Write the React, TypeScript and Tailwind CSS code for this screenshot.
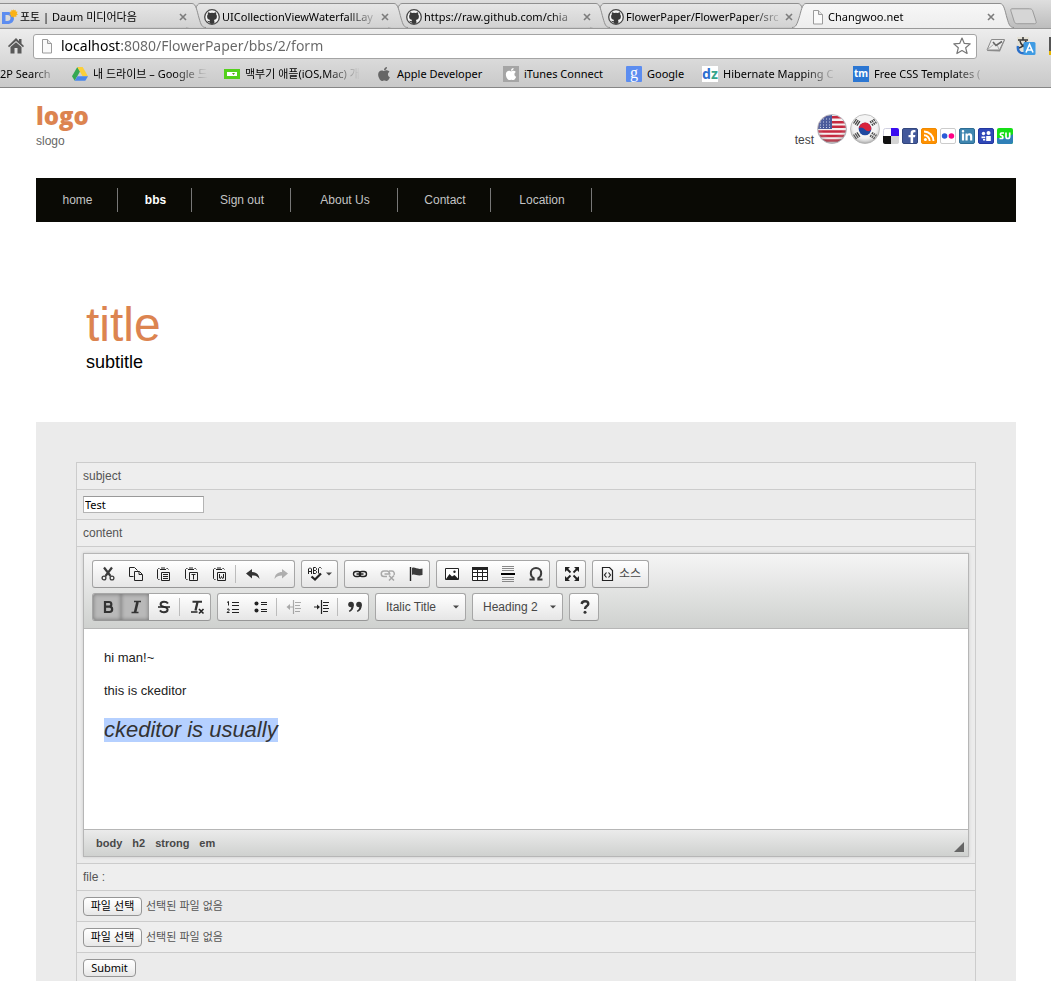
import React from "react";
import { FaApple, FaFacebookF, FaLinkedinIn } from "react-icons/fa";

const UI = "font-['Noto_Sans','Noto_Sans_CJK_KR',sans-serif]";
const ARIAL = "font-['Liberation_Sans','Noto_Sans_CJK_KR',sans-serif]";

/* ---------- browser window ---------- */

function PageIcon() {
  return (
    <svg width="16" height="16" viewBox="0 0 16 16" className="shrink-0" aria-hidden="true">
      <path d="M3.500 1.500h5l4 4v9.500h-9z" fill="#fafafa" stroke="#9a9a9a" />
      <path d="M8.500 1.500v4h4" fill="#e4e4e4" stroke="#9a9a9a" />
    </svg>
  );
}

function GithubIcon() {
  return (
    <svg width="16" height="16" viewBox="0 0 16 16" className="shrink-0" aria-hidden="true">
      <circle cx="8" cy="8" r="7.300" fill="#f4f4f4" stroke="#484848" strokeWidth="1.300" />
      <path
        fill="#3a3a3a"
        d="M4 3.200c.8 0 1.500.3 2.100.8a8 8 0 0 1 3.800 0c.6-.5 1.300-.8 2.100-.8.3.8.3 1.500.1 2.100.6.700.8 1.400.8 2.300 0 2.100-1.200 3.100-3 3.400.4.500.5.900.5 1.500v2c-1.500.500-3.300.500-4.800 0v-1.300c-1.500.3-1.900-.5-2.400-1.400.9-.1 1.400.6 2.400.4 0-.5.2-.9.500-1.200-1.800-.3-3-1.300-3-3.400 0-.9.200-1.600.8-2.300-.2-.6-.2-1.300.1-2.100z"
      />
    </svg>
  );
}

function DaumIcon() {
  return (
    <svg width="16" height="16" viewBox="0 0 16 16" className="shrink-0" aria-hidden="true">
      <path fillRule="evenodd" fill="#5d8df0" d="M0 3h5.500c4 0 6.500 2.200 6.500 6s-2.500 6-6.500 6H0zM3.500 6v6h2c2 0 3-1 3-3s-1-3-3-3z" />
      <path fill="#fbb216" d="m11 0 .9 1.500L13.600.8l.1 1.800 1.900.2-.9 1.600 1.300 1.300-1.800.5.200 1.800-1.700-.5L11.500 9l-.9-1.600-1.800.5.200-1.800-1.800-.4 1.300-1.300-.9-1.600 1.800-.2V.8l1.600.7z" />
    </svg>
  );
}

function TabShape({ active }: { active?: boolean }) {
  const edge = "M0 24.500C4 24.500 5 21 7 15S10 .5 14 .5H208C212 .5 213 8 215 15S218 24.500 222 24.500";
  return (
    <svg width="223" height="26" viewBox="0 0 223 26" className="pointer-events-none absolute top-0 -left-4" aria-hidden="true">
      <defs>
        <linearGradient id={active ? "tabOn" : "tabOff"} x1="0" x2="0" y1="0" y2="1">
          <stop offset="0" stopColor={active ? "#f7f7f7" : "#e6e6e6"} />
          <stop offset="1" stopColor={active ? "#ededed" : "#d2d2d2"} />
        </linearGradient>
      </defs>
      <path d={edge + (active ? "V26H0z" : "z")} fill={active ? "url(#tabOn)" : "url(#tabOff)"} />
      <path d={edge} fill="none" stroke="#8f8f8f" />
    </svg>
  );
}

function Close() {
  return (
    <svg width="8" height="8" viewBox="0 0 8 8" aria-hidden="true">
      <path d="m1 1 6 6M7 1 1 7" stroke="#7c7c7c" strokeWidth="1.600" />
    </svg>
  );
}

const tabs = [
  { icon: <DaumIcon />, title: "포토 | Daum 미디어다음", z: "z-[4]" },
  { icon: <GithubIcon />, title: "UICollectionViewWaterfallLay", z: "z-[3]" },
  { icon: <GithubIcon />, title: "https://raw.github.com/chia", z: "z-[2]" },
  { icon: <GithubIcon />, title: "FlowerPaper/FlowerPaper/src", z: "z-[1]" },
  { icon: <PageIcon />, title: "Changwoo.net", z: "z-[5]", active: true },
];

function TabStrip() {
  return (
    <div className="flex h-[29px] items-end overflow-hidden border-b border-[#999] bg-linear-to-b from-[#dedede] to-[#bdbdbd]">
      {tabs.map((t) => (
        <div key={t.title} className={`relative flex h-[25px] w-[202px] shrink-0 ${t.z}`}>
          <TabShape active={t.active} />
          <div className="relative flex w-full items-center gap-[2px] pt-[2px] pr-[15px] pl-[2px]">
            <button className="flex min-w-0 flex-1 items-center gap-[2px] text-left">
              {t.icon}
              <span className="flex-1 text-[11px] leading-4 whitespace-nowrap text-black [mask-image:linear-gradient(to_right,black_80%,transparent)]">
                {t.title}
              </span>
            </button>
            <button aria-label="Close tab">
              <Close />
            </button>
          </div>
        </div>
      ))}
      <button aria-label="New tab" className="mb-[3px]">
        <svg width="27" height="17" viewBox="0 0 28 17" aria-hidden="true">
          <path d="M2 .5h18c2 0 3 .7 3.500 2l3.500 11c.5 1.500 0 2.500-1.500 2.500H8c-2 0-3-.7-3.500-2L1 3C.6 1.500.7.5 2 .5z" fill="#d6d6d6" stroke="#989898" />
        </svg>
      </button>
    </div>
  );
}

function AddressBar() {
  return (
    <div className="flex h-[33px] items-center pt-px pl-2">
      <button aria-label="Home">
        <svg width="16" height="16" viewBox="0 0 16 16" aria-hidden="true">
          <path fill="#595959" d="M8 0 0 8l1 1.200L8 3l7 6.200L16 8l-2.500-2.500V1H11v2z" />
          <path fill="#595959" d="M8 4.200 2.500 9v6.500h4V10h3v5.500h4V9z" />
        </svg>
      </button>
      <label className="ml-[9px] flex h-[25px] flex-1 items-center gap-[6px] rounded-[3px] border border-[#a4a4a4] bg-white px-[5px]">
        <PageIcon />
        <input
          aria-label="Address"
          defaultValue="localhost:8080/FlowerPaper/bbs/2/form"
          className="min-w-0 flex-1 bg-[linear-gradient(to_right,#000_60px,#666_60px)] bg-clip-text text-[14px] leading-5 text-transparent outline-none"
        />
        <svg width="18" height="18" viewBox="0 0 18 18" aria-hidden="true">
          <path d="m9 1 2.300 5.400 5.900.5-4.500 3.900 1.400 5.700L9 13.500l-5.100 3 1.400-5.700L.8 6.900l5.900-.5z" fill="#fff" stroke="#777" strokeWidth="1.200" strokeLinejoin="round" />
        </svg>
      </label>
      <button aria-label="Mail" className="ml-[9px]">
        <svg width="20" height="16" viewBox="0 0 20 16" aria-hidden="true">
          <path d="M6 2h13l-5 11.500L1 13z" fill="#8a8a8a" />
          <path d="M5.500 1.500h13l-5 10.500H1z" fill="#ececec" stroke="#8b8b8b" />
          <path d="M1.500 11.500l6-5M13 11.500l-2-5" fill="none" stroke="#aaa" />
          <path d="m7 4 3 3.500L16 3.500" fill="none" stroke="#666" strokeWidth="1.600" />
        </svg>
      </button>
      <button aria-label="Translate" className="ml-[10px]">
        <svg width="20" height="20" viewBox="0 0 20 20" aria-hidden="true">
          <rect width="12" height="14" x="1" y="1" fill="#e4e1d6" />
          <path d="M2 4h10M7 1v3M4 5c1 4 4 6 7 6M10 5c-1 4-4 6-7 7" fill="none" stroke="#333" strokeWidth="1.500" />
          <path d="M2 10c-1 6 3 8 7 7" fill="none" stroke="#2a6fc9" strokeWidth="2.500" />
          <rect width="12" height="13" x="7.500" y="6" rx="1.500" fill="#3f9be3" />
          <path d="m10 16.500 3.500-8 3.500 8M11.300 14h4.400" fill="none" stroke="#fff" strokeWidth="1.600" />
        </svg>
      </button>
      <svg width="2" height="18" viewBox="0 0 2 18" className="ml-[13px]" aria-hidden="true">
        <path d="M0 0h2v14H0z" fill="#555" />
        <path d="M0 14h2v4H0z" fill="#e5b400" />
      </svg>
    </div>
  );
}

const DriveIcon = () => (
  <svg width="16" height="16" viewBox="0 0 16 16" className="shrink-0" aria-hidden="true">
    <path d="M5.300 1 0 10.200l2.700 4.600L8 5.600z" fill="#35a853" />
    <path d="M5.300 1h5.400L16 10.200h-5.400z" fill="#fbcf3b" />
    <path d="M2.700 14.800 5.400 10.200H16l-2.700 4.600z" fill="#4a86ea" />
  </svg>
);
const GreenIcon = () => (
  <svg width="16" height="16" viewBox="0 0 16 16" className="shrink-0" aria-hidden="true">
    <path d="M0 3h16v10H0z" fill="#53d01c" />
    <path d="M3 6h10v4H3z" fill="#fff" />
    <path d="M8 7h3L9.500 9z" fill="#53a01c" />
  </svg>
);
const FADE = "[mask-image:linear-gradient(to_right,black_70%,transparent)]";
const bookmarks = [
  { icon: <DriveIcon />, label: "내 드라이브 – Google 드", w: "w-[136px]", fade: true },
  { icon: <GreenIcon />, label: "맥부기 애플(iOS,Mac) 개", w: "w-[136px]", fade: true },
  { icon: <FaApple size={16} className="shrink-0 text-[#666]" />, label: "Apple Developer", w: "w-[111px]" },
  {
    icon: (
      <span className="flex size-4 shrink-0 items-center justify-center bg-[#a5a5a5] text-white">
        <FaApple size={14} />
      </span>
    ),
    label: "iTunes Connect",
    w: "w-[107px]",
  },
  {
    icon: (
      <span className="flex size-4 shrink-0 items-center justify-center rounded-[1px] bg-[#5c8df0] pb-[3px] font-['Liberation_Serif',serif] text-[16px] leading-4 text-white">
        g
      </span>
    ),
    label: "Google",
    w: "w-[60px]",
  },
  {
    icon: (
      <span className="flex size-4 shrink-0 items-center justify-center bg-white text-[14px] leading-4 font-bold text-[#2f6fd0]">
        d<span className="text-[#35a58a]">z</span>
      </span>
    ),
    label: "Hibernate Mapping C",
    w: "w-[135px]",
    fade: true,
  },
  {
    icon: (
      <span className="flex size-4 shrink-0 items-center justify-center bg-[#2b76d2] pb-[2px] text-[10px] leading-4 font-bold text-white">tm</span>
    ),
    label: "Free CSS Templates (",
    w: "w-[135px]",
    fade: true,
  },
];

function Bookmarks() {
  return (
    <nav aria-label="Bookmarks" className="flex h-[25px] items-center gap-4 overflow-hidden pb-px text-[11px] leading-4 text-black">
      <a href="#search" className="w-14 shrink-0 whitespace-nowrap [mask-image:linear-gradient(to_right,black_60%,transparent)]">
        2P Search
      </a>
      {bookmarks.map((b) => (
        <a key={b.label} href="#bookmark" className={`flex shrink-0 items-center gap-[5px] ${b.w}`}>
          {b.icon}
          <span className={`flex-1 whitespace-nowrap ${b.fade ? FADE : ""}`}>{b.label}</span>
        </a>
      ))}
    </nav>
  );
}

/* ---------- site header ---------- */

function UsFlag() {
  return (
    <svg width="30" height="30" viewBox="0 0 30 30" aria-hidden="true">
      <defs>
        <clipPath id="usClip"><circle cx="15" cy="15" r="14" /></clipPath>
        <radialGradient id="shade" cx=".5" cy=".4" r=".6">
          <stop offset=".6" stopColor="#fff" stopOpacity="0" />
          <stop offset="1" stopColor="#444" stopOpacity=".45" />
        </radialGradient>
      </defs>
      <g clipPath="url(#usClip)">
        <path d="M0 0h30v30H0z" fill="#f5f0f0" />
        <path d="M0 3.200h30M0 8.200h30M0 12.800h30M0 17.400h30M0 22h30M0 26.600h30" stroke="#c5283f" strokeWidth="2.500" />
        <path d="M0 0h15v15H0z" fill="#4a5a9b" />
        <path d="M3 5h12M3 8h12M3 11h12M3 13.500h12" stroke="#c9d0e8" strokeDasharray="1 2" />
      </g>
      <circle cx="15" cy="15" r="14.500" fill="url(#shade)" stroke="#a9a9b4" strokeWidth=".8" />
    </svg>
  );
}

function KrFlag() {
  return (
    <svg width="30" height="30" viewBox="0 0 30 30" aria-hidden="true">
      <circle cx="15" cy="15" r="14" fill="#f4f4f4" />
      <circle cx="15" cy="15" r="6.300" fill="#1f48a0" />
      <path d="M8.700 14.500a6.300 6.300 0 0 1 12.600.8c-1.500 2.700-4.500 2.200-6.300.2s-4.800-2.700-6.300-1z" fill="#d8233b" />
      <g stroke="#444" strokeWidth="1.300">
        <path d="m3.500 9.500 3-4.500M5.200 10.600l3-4.500M6.900 11.700l3-4.500" />
        <path d="m26.500 9.500-3-4.500M24.800 10.600l-3-4.500M23.100 11.700l-3-4.500" strokeDasharray="2.300 .8" />
        <path d="m3.500 20.500 3 4.500M5.200 19.400l3 4.500M6.900 18.300l3 4.500" />
        <path d="m26.500 20.500-3 4.500M24.800 19.400l-3 4.500M23.100 18.300l-3 4.500" strokeDasharray="2.300 .8" />
      </g>
      <circle cx="15" cy="15" r="14.500" fill="url(#shade)" stroke="#b0b0b0" strokeWidth=".8" />
    </svg>
  );
}

const BADGE = "flex size-4 items-center justify-center overflow-hidden rounded-[2px] border text-white";

function HeaderLinks() {
  return (
    <div className="flex items-end gap-[3px] pr-[3px]">
      <span className="-mb-1 text-xs leading-4 text-[#444]">test</span>
      <a href="#en" aria-label="English"><UsFlag /></a>
      <a href="#ko" aria-label="Korean"><KrFlag /></a>
      <a href="#delicious" aria-label="Delicious">
        <svg width="16" height="16" viewBox="0 0 16 16" aria-hidden="true">
          <rect x=".5" y=".5" width="15" height="15" rx="2" fill="#fff" stroke="#d0d0e0" />
          <path d="M8 0h6a2 2 0 0 1 2 2v6H8z" fill="#3a0df0" />
          <path d="M0 8h8v8H2a2 2 0 0 1-2-2z" fill="#111" />
          <path d="M8 8h8v6a2 2 0 0 1-2 2H8z" fill="#d4d4d4" />
        </svg>
      </a>
      <a href="#facebook" aria-label="Facebook" className={`${BADGE} items-end border-[#33477e] bg-[#43599b] pl-1`}>
        <FaFacebookF size={13} />
      </a>
      <a href="#rss" aria-label="RSS" className={`${BADGE} border-[#f08a00] bg-[#ff9100]`}>
        <svg width="12" height="12" viewBox="0 0 12 12" aria-hidden="true">
          <path d="M1 1.500A9.500 9.500 0 0 1 10.500 11M1 5.300A5.700 5.700 0 0 1 6.700 11" fill="none" stroke="#fff" strokeWidth="1.900" />
          <circle cx="2.400" cy="9.600" r="1.500" fill="#fff" />
        </svg>
      </a>
      <a href="#flickr" aria-label="Flickr" className={`${BADGE} border-[#ccc] bg-white`}>
        <svg width="14" height="8" viewBox="0 0 14 8" aria-hidden="true">
          <circle cx="3.600" cy="4" r="2.800" fill="#2a5bd7" />
          <circle cx="10.400" cy="4" r="2.800" fill="#ff0084" />
        </svg>
      </a>
      <a href="#linkedin" aria-label="LinkedIn" className={`${BADGE} border-[#2d6d94] bg-[#3f86b0]`}>
        <FaLinkedinIn size={12} />
      </a>
      <a href="#myspace" aria-label="Myspace" className={`${BADGE} border-[#2237a0] bg-[#3048b8]`}>
        <svg width="14" height="14" viewBox="0 0 14 14" fill="#fff" aria-hidden="true">
          <circle cx="4.500" cy="4.500" r="1.700" /><circle cx="9.500" cy="4" r="2" />
          <path d="M2.500 7.500h3.700v1.700H2.500zM7.200 7h4.600v5H7.200zM4 10h2.200v1.500H4z" />
        </svg>
      </a>
      <a href="#stumbleupon" aria-label="StumbleUpon">
        <svg width="16" height="16" viewBox="0 0 16 16" aria-hidden="true">
          <rect width="16" height="16" rx="2" fill="#16df16" />
          <path d="M0 10c5 0 11 0 16-4v8a2 2 0 0 1-2 2H2a2 2 0 0 1-2-2z" fill="#2f80b8" />
          <path d="M7 5H4.500C3 5 3 7.500 4.500 7.500S6.500 10.500 5 10.500H2.500M9 4.500v4.300c0 1.200.5 1.700 1.700 1.700s2-.5 2-1.700V4.500" fill="none" stroke="#fff" strokeWidth="1.700" />
        </svg>
      </a>
    </div>
  );
}

const navItems = ["home", "bbs", "Sign out", "About Us", "Contact", "Location"];

/* ---------- editor ---------- */

function Icon({ children, dim }: { children: React.ReactNode; dim?: boolean }) {
  return (
    <svg width="16" height="16" viewBox="0 0 16 16" fill="none" stroke="#222" className={dim ? "opacity-35" : ""} aria-hidden="true">
      {children}
    </svg>
  );
}

function Tool({ label, children, dim, on }: { label: string; children: React.ReactNode; dim?: boolean; on?: boolean }) {
  return (
    <button
      aria-label={label}
      disabled={dim}
      aria-pressed={on}
      className={`flex h-[26px] w-7 items-center justify-center pl-px ${on ? "bg-[#b9b9b9] shadow-[inset_0_0_4px_rgba(0,0,0,0.4)]" : ""}`}
    >
      <Icon dim={dim}>{children}</Icon>
    </button>
  );
}

const BOX = "flex h-7 items-center overflow-hidden rounded-[3px] border border-[#a6a6a6] border-b-[#979797] bg-linear-to-b from-white to-[#e6e6e6]";
const Group = ({ children }: { children: React.ReactNode }) => <div className={BOX}>{children}</div>;
const Sep = () => <span className="mx-[2px] h-[18px] w-px bg-[#bcbcbc]" />;

const clipboard = <path d="M3.500 2.500H2.500L1.500 3.500v9l1 1h1M10.500 2.500h1l1 1M4 3.500h6M5 2h4" />;

function Combo({ label, value }: { label: string; value: string }) {
  return (
    <div className={`${BOX} relative w-[91px]`}>
      <select aria-label={label} className="w-full appearance-none bg-transparent pl-[10px] text-xs leading-4 text-[#474747] outline-none">
        <option>{value}</option>
      </select>
      <svg width="6" height="4" viewBox="0 0 6 4" className="pointer-events-none absolute right-[6px]" aria-hidden="true">
        <path d="M0 .5h6l-3 3z" fill="#474747" />
      </svg>
    </div>
  );
}

function Toolbar() {
  return (
    <div className="flex flex-col gap-[5px] border-b border-[#b6b6b6] bg-linear-to-b from-[#f5f5f5] to-[#cfd1cf] px-2 pt-[6px] pb-[7px]">
      <div className="flex flex-wrap gap-[6px]">
        <Group>
          <Tool label="Cut">
            <path d="M4 1.500 10.500 10M12 1.500 5.500 10" stroke="#3c3c3c" strokeWidth="2.200" />
            <circle cx="4" cy="12" r="1.900" stroke="#3c3c3c" strokeWidth="1.300" /><circle cx="12" cy="12" r="1.900" stroke="#3c3c3c" strokeWidth="1.300" />
          </Tool>
          <Tool label="Copy">
            <path d="M5.500 10.500h-4v-9h5l3 3M6.500 5.500h5l3 3v6h-8zM11 5.500v3h3" />
          </Tool>
          <Tool label="Paste">
            {clipboard}<path d="M5.500 6.500h8v8h-8zM7 8.500h5M7 10.500h5M7 12.500h5" />
          </Tool>
          <Tool label="Paste as plain text">
            {clipboard}<path d="M5.500 6.500h8v8h-8zM7.500 8.500h4M9.500 8.500v5" />
          </Tool>
          <Tool label="Paste from Word">
            {clipboard}<path d="M5.500 6.500h8v8h-8zM7.500 8v4l1 .5 1-2 1 2 1-.5V8" />
          </Tool>
          <Sep />
          <Tool label="Undo">
            <path d="M1 7.500 7 3v3c4 0 7 2 7.500 7C12.500 10 10 9.500 7 9.500v3z" fill="#333" stroke="none" />
          </Tool>
          <Tool label="Redo" dim>
            <path d="M15 7.500 9 3v3c-4 0-7 2-7.500 7C3.500 10 6 9.500 9 9.500v3z" fill="#333" stroke="none" />
          </Tool>
        </Group>
        <div className={BOX}>
          <button aria-label="Spell check" className="flex h-[26px] w-[35px] items-center justify-center gap-px">
            <svg width="18" height="16" viewBox="0 0 18 16" fill="none" stroke="#222" aria-hidden="true">
              <path d="M1.500 8V3l1-1h1l1 1v5M1.500 5.500h3M6.500 8V1.500h2l1 1v1l-1 1h-2M8.500 4.500l1 1v1l-1 1h-2M14.500 2.500l-1-1h-1l-1 1V7l1 1" />
              <path d="m4.500 10.500 3.500 3 6-6" strokeWidth="2.200" />
            </svg>
            <svg width="6" height="4" viewBox="0 0 6 4" aria-hidden="true"><path d="M0 .5h6l-3 3z" fill="#474747" /></svg>
          </button>
        </div>
        <Group>
          <Tool label="Link">
            <rect x="1.500" y="5.500" width="7" height="5" rx="2.500" strokeWidth="1.400" />
            <rect x="7.500" y="5.500" width="7" height="5" rx="2.500" strokeWidth="1.400" />
            <path d="M4.500 8h7" strokeWidth="1.400" />
          </Tool>
          <Tool label="Unlink" dim>
            <path d="M7 10.500H4a2.700 2.700 0 0 1 0-5.500h3a2.700 2.700 0 0 1 2.500 3M9 5h3a2.700 2.700 0 0 1 2 4M4.500 8h6" strokeWidth="1.500" />
            <path d="m9 9.500 5 5M14 9.500l-5 5" strokeWidth="1.500" />
          </Tool>
          <Tool label="Anchor">
            <path d="M2.500 1v14" strokeWidth="1.400" />
            <path d="M4 2c3-1.500 5 2 10.500.5V9C9 10.500 7 7.500 4 9z" fill="#3c3c3c" stroke="none" />
          </Tool>
        </Group>
        <Group>
          <Tool label="Image">
            <path d="M1.500 2.500h13v11h-13z" fill="#fff" />
            <path d="m2 13 3.500-5 2.500 2.500L10.500 9l4 4z" fill="#222" stroke="none" /><circle cx="10.500" cy="5.800" r="1.200" fill="#222" stroke="none" />
          </Tool>
          <Tool label="Table">
            <path d="M.500 1.500h15v13H.500z" fill="#fff" />
            <path d="M0 2.500h16" strokeWidth="3" /><path d="M5.500 3v11M10.500 3v11M1 6.500h14M1 10.500h14" />
          </Tool>
          <Tool label="Horizontal line">
            <path d="M2 .5h12M2 2.500h12M2 4.500h12M2 11.500h12M2 13.500h12M2 15.500h12" stroke="#888" />
            <path d="M1 8h14" strokeWidth="2" stroke="#000" />
          </Tool>
          <Tool label="Special character">
            <path d="M1.500 13.500h4.200v-1.300C3.800 11 2.800 9.300 2.800 7.300 2.800 4 5 2 8 2s5.200 2 5.200 5.300c0 2-1 3.700-2.900 4.900v1.300h4.200" stroke="#3c3c3c" strokeWidth="2" />
          </Tool>
        </Group>
        <Group>
          <Tool label="Maximize">
            <path d="m2 2 4.500 4.500M14 2 9.500 6.500M2 14l4.500-4.500M14 14 9.500 9.500" strokeWidth="1.800" />
            <path d="M1 1h5L1 6zM15 1h-5l5 5zM1 15h5l-5-5zM15 15h-5l5-5z" fill="#222" stroke="none" />
          </Tool>
        </Group>
        <div className={BOX}>
          <button className="flex h-[26px] w-[55px] items-center justify-center gap-[3px] text-xs leading-4 text-[#474747]">
            <Icon>
              <path d="M2.500 1.500h7l3 3v10h-10zM6.500 6.500l-2 2.500 2 2.500M8.500 6.500l2 2.500-2 2.500" strokeWidth="1.200" />
            </Icon>
            소스
          </button>
        </div>
      </div>
      <div className="flex flex-wrap gap-[6px]">
        <Group>
          <Tool label="Bold" on>
            <path d="M5 3h4a2.300 2.300 0 0 1 0 4.700H5zM5 7.700h4.500a2.500 2.500 0 0 1 0 5.300H5z" stroke="#333" strokeWidth="2.200" />
          </Tool>
          <Tool label="Italic" on>
            <path d="M6 2.500h7M3.500 13.500h7" stroke="#333" strokeWidth="1.600" /><path d="M9.500 3 7 13.500" stroke="#333" strokeWidth="2.600" />
          </Tool>
          <Tool label="Strike through">
            <path d="M12 4.500C11 3 9.500 2.700 8 2.700c-2 0-3.400 1-3.400 2.500 0 3.400 7 2 7 5.300 0 1.700-1.600 2.800-3.700 2.800-1.700 0-3-.6-4-2" stroke="#333" strokeWidth="2" />
            <path d="M2 8h12" strokeWidth="1.500" />
          </Tool>
          <Sep />
          <Tool label="Remove format">
            <path d="M3.500 2.700h9.500" stroke="#333" strokeWidth="2" /><path d="M8.500 3 6.500 11.500" stroke="#333" strokeWidth="2.300" /><path d="M2 13h6.500" strokeWidth="1.300" />
            <path d="m10 10 4.500 4.500M14.500 10 10 14.500" strokeWidth="1.600" />
          </Tool>
        </Group>
        <Group>
          <Tool label="Numbered list">
            <path d="M2 3.500 3.500 2.500v4M2 10.500l1-.5h1v1.500l-2 2h2.500" /><path d="M7 3.500h7M7 6.500h7M7 10.500h7M7 13.500h7" strokeWidth="1.200" />
          </Tool>
          <Tool label="Bulleted list">
            <circle cx="3.500" cy="4.500" r="2" fill="#222" stroke="none" /><circle cx="3.500" cy="11.500" r="2" fill="#222" stroke="none" />
            <path d="M8 3.500h6M8 5.500h6M8 10.500h6M8 12.500h6" strokeWidth="1.200" />
          </Tool>
          <Sep />
          <Tool label="Decrease indent" dim>
            <path d="M7.500 1v14" strokeWidth="1.200" /><path d="M9 3.500h6M9 6.500h5M9 9.500h6M9 12.500h5M3 8h4" /><path d="M4 5v6L.500 8z" fill="#222" stroke="none" />
          </Tool>
          <Tool label="Increase indent">
            <path d="M7.500 1v14" strokeWidth="1.200" /><path d="M9 3.500h6M9 6.500h5M9 9.500h6M9 12.500h5M0 8h4" /><path d="M3 5.500v5l3-2.500z" fill="#222" stroke="none" />
          </Tool>
          <Sep />
          <Tool label="Block quote">
            <g fill="#333" stroke="none">
              <circle cx="4" cy="5.500" r="2.800" /><path d="M6.800 5.500C7 9.500 5 12 2.500 13l-.7-1.200C3.500 11 4.500 9.500 4.300 7z" />
              <circle cx="12" cy="5.500" r="2.800" /><path d="M14.800 5.500c.2 4-1.800 6.500-4.300 7.500l-.7-1.200c1.700-.8 2.700-2.300 2.500-4.800z" />
            </g>
          </Tool>
        </Group>
        <Combo label="Style" value="Italic Title" />
        <Combo label="Format" value="Heading 2" />
        <Group>
          <Tool label="About">
            <path d="M4.700 5C4.900 3.200 6.200 2.300 8 2.300c2 0 3.300 1 3.300 2.600C11.300 7.200 8 7 8 10" stroke="#333" strokeWidth="2.400" />
            <circle cx="8" cy="13.200" r="1.500" fill="#333" stroke="none" />
          </Tool>
        </Group>
      </div>
    </div>
  );
}

function Editor() {
  return (
    <div className="border border-[#b6b6b6] shadow-[0_0_3px_rgba(0,0,0,0.15)]">
      <Toolbar />
      <div
        role="textbox"
        aria-label="content"
        aria-multiline="true"
        contentEditable
        suppressContentEditableWarning
        spellCheck={false}
        className="min-h-[200px] bg-white px-5 pt-[19px] text-[13px] leading-5 text-[#222] outline-none"
      >
        <p>hi man!~</p>
        <p className="mt-[13px]">this is ckeditor</p>
        <h2 className="mt-[17px] text-[22px] leading-6 text-[#333]">
          <em className="inline-block bg-[#b5d0ff]">ckeditor is usually</em>
        </h2>
      </div>
      <div className="flex h-[27px] items-center justify-between border-t border-[#b6b6b6] bg-linear-to-b from-[#ebebeb] to-[#cfd1cf] pr-1 pl-3 text-[11px] leading-4 font-bold text-[#484848]">
        <div className="flex gap-[10px]">
          <a href="#body">body</a>
          <a href="#h2">h2</a>
          <a href="#strong">strong</a>
          <a href="#em">em</a>
        </div>
        <svg width="10" height="10" viewBox="0 0 10 10" className="mt-2" aria-hidden="true">
          <path d="M10 0v10H0z" fill="#666" />
        </svg>
      </div>
    </div>
  );
}

/* ---------- form ---------- */

const BTN = "rounded-[4px] border border-[#959595] bg-linear-to-b from-white via-[#f6f6f6] to-[#e6e6e6] text-black";

function FileField({ id }: { id: string }) {
  return (
    <div className="flex items-center gap-1">
      <label htmlFor={id} className={`${BTN} flex h-[19px] w-[59px] items-center justify-center text-[11px] leading-4`}>
        파일 선택
        <input id={id} type="file" className="sr-only" />
      </label>
      <span className="text-[11px] leading-4">선택된 파일 없음</span>
    </div>
  );
}

const ROW = "border border-[#ccc] px-[6px]";

export default function App() {
  return (
    <div className={`flex min-h-screen flex-col bg-white ${ARIAL}`}>
      <div className={`bg-[#ededed] ${UI}`}>
        <TabStrip />
        <div className="border-b border-[#868686] bg-linear-to-b from-[#ededed] to-[#c9c9c9]">
          <AddressBar />
          <Bookmarks />
        </div>
      </div>

      <div className="mr-[35px] ml-9 flex flex-1 flex-col">
        <header className="flex h-[90px] items-start justify-between">
          <div className="pt-[12px]">
            <h1 className="font-['Open_Sans',sans-serif] text-[24px] leading-8 font-extrabold text-[#dc8450]">logo</h1>
            <p className="text-xs leading-[18px] text-[#666]">slogo</p>
          </div>
          <div className="pt-[26px]">
            <HeaderLinks />
          </div>
        </header>

        <nav className="bg-[#0a0a05] py-[10px]">
          <ul className="grid grid-cols-[82px_74px_99px_107px_93px_101px] text-center text-xs leading-6">
            {navItems.map((n) => (
              <li key={n} className="border-r border-[#777] pl-[2px]">
                <a href="#nav" className={n === "bbs" ? "font-bold text-white" : "text-[#c4c4c4]"}>
                  {n}
                </a>
              </li>
            ))}
          </ul>
        </nav>

        <section className="px-[50px] pt-[75px] pb-[50px]">
          <h2 className="text-[48px] leading-[55px] text-[#dc8450]">title</h2>
          <p className="text-[18px] leading-5 text-black">subtitle</p>
        </section>

        <form className="flex-1 bg-[#ebebeb] px-10 pt-10" onSubmit={(e) => e.preventDefault()}>
          <table className="w-full border-collapse text-xs leading-4 text-[#555]">
            <tbody>
              <tr className="h-[27px] bg-[#eeeeee]">
                <td className={ROW}><label htmlFor="subject">subject</label></td>
              </tr>
              <tr className="h-[30px]">
                <td className={ROW}>
                  <input
                    id="subject"
                    defaultValue="Test"
                    className={`block h-[17px] w-[121px] border border-[#b4b4b4] border-t-[#999] bg-white px-[1px] text-[11px] text-black outline-none ${UI}`}
                  />
                </td>
              </tr>
              <tr className="h-[27px] bg-[#eeeeee]">
                <td className={ROW}>content</td>
              </tr>
              <tr>
                <td className={`${ROW} py-[6px]`}><Editor /></td>
              </tr>
              <tr className="h-[27px] bg-[#eeeeee]">
                <td className={ROW}>file :</td>
              </tr>
              <tr className="h-[31px]">
                <td className={ROW}><FileField id="file1" /></td>
              </tr>
              <tr className="h-[31px] bg-[#eeeeee]">
                <td className={ROW}><FileField id="file2" /></td>
              </tr>
              <tr>
                <td className="border-x border-[#ccc] px-[6px] pt-[6px] pb-1">
                  <button type="submit" className={`${BTN} ${UI} block h-[18px] w-[53px] text-[11px] leading-4`}>
                    Submit
                  </button>
                </td>
              </tr>
            </tbody>
          </table>
        </form>
      </div>
    </div>
  );
}
